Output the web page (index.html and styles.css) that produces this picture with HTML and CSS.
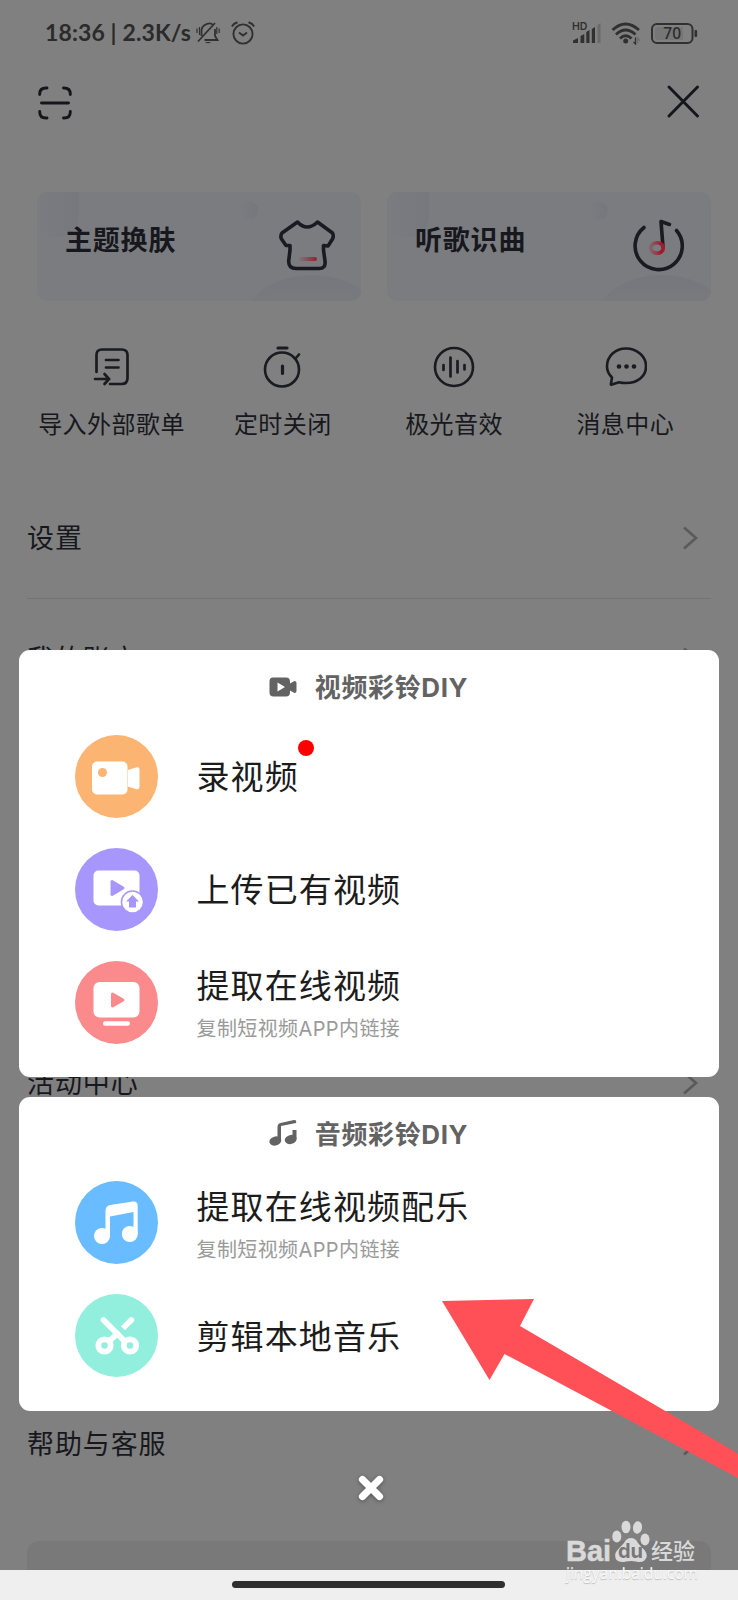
FILE: index.html
```html
<!DOCTYPE html>
<html lang="zh-CN">
<head>
<meta charset="utf-8">
<title>彩铃DIY</title>
<link rel="stylesheet" href="styles.css">
</head>
<body>
<div class="phone">
  <main class="page">
    <header class="status">
      <span class="status-text">18:36 | 2.3K/s</span>
      <svg class="bell" width="24" height="24" viewBox="0 0 24 24" fill="none" stroke="#303030" stroke-width="1.800">
        <path d="M2 20.500L19 2M8 4.500Q14 .5 17 4M5.500 15V9Q6 6 8 4.500M19 8V15L21.500 19H8.500"/>
        <path d="M1 7.500V12M3.500 6V14M20.800 6V13M23.200 7.500V12" stroke-width="1.200"/>
        <path d="M9 21H15Q12 23.600 9 21Z" fill="#303030" stroke="none"/>
      </svg>
      <svg class="alarm" width="24" height="24" viewBox="0 0 24 24" fill="none" stroke="#303030" stroke-width="1.900">
        <circle cx="12" cy="13" r="9.600"/><path d="M8 11.500L12 14.500L16 11.500"/><path d="M.8 5.500Q2.500 2.500 6.500 1.200M23.200 5.500Q21.500 2.500 17.500 1.200" stroke-width="2"/>
      </svg>
      <span class="spacer"></span>
      <svg class="signal" width="29" height="23" viewBox="0 0 29 23" fill="#303030">
        <text x="0" y="8.300" class="hd">HD</text>
        <path d="M1 21V18.500L6 16V21ZM8.500 21V14L12.300 12V21ZM14.300 21V10L17.500 8V21ZM19.800 21V7L23 5V21Z"/>
        <path d="M25.500 21V3L28.500 1V21Z" fill="#6a6a6a"/>
      </svg>
      <svg class="wifi" width="30" height="24" viewBox="0 0 30 24" fill="none" stroke="#303030" stroke-width="2.800">
        <path d="M1.500 9Q14.500-3 28 9M5 13.500Q14.500 4.500 24.500 13.500M9 17.500Q14.500 12 20.500 17.500"/>
        <circle cx="14.700" cy="20" r="2.500" fill="#303030" stroke="none"/>
        <path d="M24.500 16.500V23L22.500 21" stroke-width="1.300"/><path d="M26.500 22.500V17L29 20" stroke="#6c6c6c" stroke-width="1.300"/>
      </svg>
      <svg class="battery" width="47" height="21" viewBox="0 0 47 21">
        <rect x="1" y="1" width="40.500" height="19" rx="5" fill="none" stroke="#303030" stroke-width="2"/>
        <path d="M4 7Q4 4 7 4H32V17H7Q4 17 4 14Z" fill="#767676"/>
        <rect x="43.500" y="7" width="2.600" height="7" rx="1" fill="#303030"/>
        <text x="21.200" y="16" text-anchor="middle" class="pct">70</text>
      </svg>
    </header>

    <div class="topbar">
      <svg class="scan" width="34" height="34" viewBox="0 0 34 34" fill="none" stroke="#15161c" stroke-width="2.900" stroke-linecap="round">
        <path d="M1.700 8.500V8Q1.700 2 8 2H9M25.500 2H26Q32.300 2 32.300 8V8.500M1.700 25.500V26Q1.700 32 8 32H9M25.500 32H26Q32.300 32 32.300 26V25.500M3.500 17H30.500"/>
      </svg>
      <svg width="34" height="34" viewBox="0 0 34 34" fill="none" stroke="#15161c" stroke-width="2.900" stroke-linecap="round"><path d="M3 2L31.500 31M31.500 2L3 31"/></svg>
    </div>

    <section class="cards">
      <div class="card">
        <span class="blob corner"></span><span class="blob dot"></span><span class="blob hill"></span>
        <span class="card-title">主题换肤</span>
        <svg class="card-icon" width="56" height="54" viewBox="0 0 56 54" fill="none" stroke="#1a1b22" stroke-width="3.600" stroke-linejoin="round">
          <defs><linearGradient id="red" x1="0" x2="1"><stop offset="0" stop-color="#a01b2f" stop-opacity="0"/><stop offset="1" stop-color="#a01b2f"/></linearGradient></defs>
          <path d="M18.500 3Q28 13 38.500 3L53.500 14Q55 17 53.500 20L49 27L44.500 26.500V31L46 42Q47 49.500 40 49.500H17Q9.500 49.500 9.700 42L11 31V26.500L7 26.500L2.500 20Q1 17 3 14Z"/>
          <rect x="19" y="38" width="19" height="4" rx="2" fill="url(#red)" stroke="none"/>
        </svg>
      </div>
      <div class="card">
        <span class="blob corner"></span><span class="blob dot"></span><span class="blob hill"></span>
        <span class="card-title">听歌识曲</span>
        <svg class="card-icon note" width="52" height="54" viewBox="0 0 52 54" fill="none" stroke="#1a1b22" stroke-width="3.600" stroke-linecap="round" stroke-linejoin="round">
          <path d="M12 8.500A23.600 23.600 0 1 0 44.500 11.500"/>
          <path d="M37.500 5.500L29 2.500L31 28"/>
          <ellipse cx="25" cy="29" rx="6.300" ry="5.300" stroke="url(#red2)"/>
          <defs><linearGradient id="red2" x1="0" x2="1"><stop offset="0" stop-color="#a01b2f" stop-opacity=".25"/><stop offset=".8" stop-color="#a01b2f"/></linearGradient></defs>
        </svg>
      </div>
    </section>

    <nav class="tools">
      <div class="tool">
        <svg width="44" height="44" viewBox="0 0 44 44" fill="none" stroke="#1a1b20" stroke-width="2.700" stroke-linecap="round">
          <path d="M6.500 27V10Q6.500 4.500 12 4.500H31.500Q37.500 4.500 37.500 10V33Q37.500 39 31.500 39H20M16 15H28.500M16 22.500H28.500M5 34H18M14.500 29L19 34L14.500 39"/>
        </svg><span>导入外部歌单</span>
      </div>
      <div class="tool">
        <svg width="44" height="44" viewBox="0 0 44 44" fill="none" stroke="#1a1b20" stroke-width="2.600" stroke-linecap="round">
          <circle cx="21" cy="24.500" r="17"/><path d="M34.500 13.500L38 9.500"/><path d="M17 3H26M21.500 21V28.500" stroke-width="3.200"/>
        </svg><span>定时关闭</span>
      </div>
      <div class="tool">
        <svg width="44" height="44" viewBox="0 0 44 44" fill="none" stroke="#1a1b20" stroke-width="2.600" stroke-linecap="round">
          <circle cx="22" cy="22" r="19"/><path d="M11.500 20V25M18.500 12.500V31.500M25.500 16V27.500M32.500 20V24.500" stroke-width="2.700"/>
        </svg><span>极光音效</span>
      </div>
      <div class="tool">
        <svg width="44" height="44" viewBox="0 0 44 44" fill="none" stroke="#1a1b20" stroke-width="2.600" stroke-linejoin="round">
          <path d="M9 39.500Q7.500 40 8 38.500L9 32.500Q4 27.500 4 21.500C4 11 12.500 3.500 23 3.500S43 11 43 21.200S34.500 38 23 38Q19 38 16 37.200Z"/>
          <g fill="#1a1b20" stroke="none"><circle cx="16" cy="21.500" r="2.300"/><circle cx="23.500" cy="21.500" r="2.300"/><circle cx="31" cy="21.500" r="2.300"/></g>
        </svg><span>消息中心</span>
      </div>
    </nav>

    <section class="list">
      <div class="row line"><span>设置</span><svg class="chev" width="16" height="24" viewBox="0 0 16 24"><path d="M2 1.500L14 12L2 22.500"/></svg></div>
      <div class="row"><span>我的账户</span><svg class="chev" width="16" height="24" viewBox="0 0 16 24"><path d="M2 1.500L14 12L2 22.500"/></svg></div>
      <div class="row activity"><span>活动中心</span><svg class="chev" width="16" height="24" viewBox="0 0 16 24"><path d="M2 1.500L14 12L2 22.500"/></svg></div>
      <div class="row help"><span>帮助与客服</span><svg class="chev" width="16" height="24" viewBox="0 0 16 24"><path d="M2 1.500L14 12L2 22.500"/></svg></div>
    </section>
    <button class="logout">退出登录</button>
  </main>

  <div class="overlay">
    <section class="dialog">
      <h2 class="dialog-head">
        <svg width="28" height="28" viewBox="0 0 28 28" fill="#636363"><path fill-rule="evenodd" d="M4 4.500H17Q21 4.500 21 8.500V10.500L25.500 8Q27.500 8 27.500 10V18Q27.500 20 25.500 20L21 17.500V19.500Q21 23.500 17 23.500H4.500Q.5 23.500 .5 19.500V8.500Q.5 4.500 4 4.500ZM8.500 9.500V18.500L16 14Z"/></svg>
        <span>视频彩铃DIY</span>
      </h2>
      <div class="item">
        <svg class="disc" viewBox="0 0 83 83"><circle cx="41.500" cy="41.500" r="41.500" fill="#fbb471"/>
          <rect x="17" y="26.500" width="35.500" height="33" rx="5" fill="#fff"/><path d="M52.800 35L61 32.500Q64.500 31.500 64.500 34.500V51.500Q64.500 55 61 54L52.800 51.500Z" fill="#fff"/><circle cx="27.500" cy="37.500" r="4.500" fill="#fbb471"/></svg>
        <div class="copy"><span class="name">录视频<i class="badge"></i></span></div>
      </div>
      <div class="item">
        <svg class="disc" viewBox="0 0 83 83"><circle cx="41.500" cy="41.500" r="41.500" fill="#a797fc"/>
          <rect x="18.500" y="22.500" width="46" height="35" rx="5" fill="#fff"/><path d="M37 33.500L48 40L37 46.500Z" fill="#a797fc" stroke="#a797fc" stroke-width="3" stroke-linejoin="round"/>
          <circle cx="57.500" cy="54" r="11.800" fill="#a797fc"/><circle cx="57.500" cy="54" r="10.300" fill="#fff"/><path d="M57.500 47L64 53.500H61V59.500H54V53.500H51Z" fill="#a797fc"/></svg>
        <div class="copy"><span class="name">上传已有视频</span></div>
      </div>
      <div class="item">
        <svg class="disc" viewBox="0 0 83 83"><circle cx="41.500" cy="41.500" r="41.500" fill="#fa8a8b"/>
          <rect x="18.500" y="21" width="46" height="35.500" rx="6" fill="#fff"/><path d="M37.500 33L48 39L37.500 45Z" fill="#fa8a8b" stroke="#fa8a8b" stroke-width="3" stroke-linejoin="round"/><rect x="28" y="60.300" width="27" height="4.500" rx="2.200" fill="#fff"/></svg>
        <div class="copy sub"><span class="name">提取在线视频</span><span class="desc">复制短视频APP内链接</span></div>
      </div>
    </section>

    <section class="dialog">
      <h2 class="dialog-head">
        <svg width="28" height="28" viewBox="0 0 28 28" fill="#636363"><path d="M8.500 8Q8.500 4.500 11.500 4L25 1Q28 .8 27 4L12 7V21H8.500Z"/><path d="M23.500 11H27.500V20H23.500Z"/><ellipse cx="6.300" cy="22" rx="6" ry="4.500" transform="rotate(-15 6.300 22)"/><ellipse cx="21.700" cy="20.500" rx="6" ry="4.500" transform="rotate(-15 21.700 20.500)"/></svg>
        <span>音频彩铃DIY</span>
      </h2>
      <div class="item">
        <svg class="disc" viewBox="0 0 83 83"><circle cx="41.500" cy="41.500" r="41.500" fill="#69bcff"/>
          <g fill="#fff"><path d="M30.500 30Q30.500 25 35 24L58 20.500Q62.700 20 62.700 25V53H58.500V31L35 35.500V55H30.500Z"/><circle cx="27" cy="55" r="8"/><circle cx="54.800" cy="53" r="8"/></g></svg>
        <div class="copy sub"><span class="name">提取在线视频配乐</span><span class="desc">复制短视频APP内链接</span></div>
      </div>
      <div class="item">
        <svg class="disc" viewBox="0 0 83 83" fill="none" stroke="#fff"><circle cx="41.500" cy="41.500" r="41.500" fill="#92eedd" stroke="none"/>
          <path d="M28.500 26L49.500 47M34.500 47L42.500 39.500" stroke-width="5.700" stroke-linecap="round"/><path d="M56.300 26L56 26.300" stroke-width="5.700" stroke-linecap="round"/><path d="M56.500 25.800L48 34.300" stroke-width="5.700"/>
          <circle cx="29.500" cy="51.500" r="6.200" stroke-width="5.800"/><circle cx="55" cy="51.500" r="6.200" stroke-width="5.800"/></svg>
        <div class="copy low"><span class="name">剪辑本地音乐</span></div>
      </div>
    </section>
    <svg class="dismiss" width="26" height="26" viewBox="0 0 26 26"><path d="M4.500 4.500L21.500 21.500M21.500 4.500L4.500 21.500" stroke="#fff" stroke-width="7.200" stroke-linecap="round"/></svg>
  </div>

  <footer class="navbar"><span class="pill"></span></footer>

  <svg class="pointer" width="296" height="180" viewBox="0 0 296 180"><path d="M0 2L92 0L78 27L296 154.500V179L62.500 55L47.500 81Z" fill="#ff5058"/></svg>

  <div class="watermark">
    <div class="mark">
      <span class="bai">Bai</span>
      <svg width="38" height="43" viewBox="0 0 38 43" fill="#d9d9d9"><ellipse cx="4.800" cy="16.500" rx="4.500" ry="6"/><ellipse cx="14" cy="7" rx="4.500" ry="6.300"/><ellipse cx="25.500" cy="7.500" rx="4.500" ry="6.200" transform="rotate(8 25.500 7.500)"/><ellipse cx="33" cy="19.500" rx="4.500" ry="6"/><path d="M19 18Q23.500 18 26 23Q29 27 32.500 30Q37 36 32.500 40.500Q29 43 24 41.500Q19 40.500 14 41.500Q8 43 4.500 40Q1.500 35 5 30.500L12 23Q14.500 18 19 18Z"/><text x="18.500" y="37.800" text-anchor="middle" class="du">du</text></svg>
      <span class="exp">经验</span>
    </div>
    <span class="url">jingyan.baidu.com</span>
  </div>
</div>
</body>
</html>
```

FILE: styles.css
```css
* { box-sizing: border-box; }
body { margin: 0; }
.phone {
  position: relative;
  width: 738px;
  height: 1600px;
  overflow: hidden;
  background: #808080;
  color: #17181d;
  font-family: "Noto Sans CJK SC", sans-serif;
  display: flex;
  flex-direction: column;
}
svg { display: block; flex: none; }
.page { height: 1570px; overflow: hidden; display: flex; flex-direction: column; }

/* Status bar */
.status { height: 66px; flex: none; padding: 0 40px 0 45px; display: flex; align-items: center; }
.status-text { width: 146px; margin-top: -2px; font: 700 23px/30px Lato, sans-serif; letter-spacing: .12px; color: #2b2b2b; white-space: nowrap; }
.bell { margin-left: 5px; }
.alarm { margin-left: 11px; }
.spacer { flex: 1; }
.signal { overflow: visible; }
.hd { font: 600 10.500px Inter, sans-serif; }
.wifi { margin-left: 10px; }
.battery { margin-left: 10px; }
.pct { font: 500 15.500px "Noto Sans", sans-serif; fill: #2b2b2b; }

.topbar { height: 72px; flex: none; padding: 0 38px; display: flex; align-items: center; justify-content: space-between; }
.scan { margin-top: 2px; }

/* Feature cards */
.cards { flex: none; margin-top: 54px; padding: 0 27px 0 37px; display: grid; grid-template-columns: 1fr 1fr; gap: 26px; }
.card {
  position: relative;
  height: 109px;
  border-radius: 10px;
  overflow: hidden;
  background: #7b7c7f;
  padding: 27px 26px 0 28px;
  display: flex;
  justify-content: space-between;
}
.card-title { position: relative; font-size: 27px; line-height: 40px; font-weight: 700; letter-spacing: .8px; }
.card-icon { position: relative; }
.card-icon.note { margin-right: 1px; }
.blob { position: absolute; background: #76787e; }
.corner { left: 0; top: 0; width: 42px; height: 46px; border-radius: 0 0 22px 0; background: linear-gradient(90deg, #7b7c80, #76787d); }
.dot { left: 202px; top: 9px; width: 19px; height: 19px; border-radius: 50%; background: linear-gradient(90deg, #7b7c7f, #75777c); }
.hill { left: 206px; top: 83px; width: 138px; height: 100px; border-radius: 50%; background: linear-gradient(#75777c, #7b7c7f 45%); }

/* Tool shortcuts */
.tools { flex: none; margin-top: 44px; padding: 0 27px 0 26px; height: 97px; display: grid; grid-template-columns: repeat(4, 1fr); }
.tool { display: flex; flex-direction: column; align-items: center; gap: 19px; font-size: 24px; line-height: 30px; letter-spacing: .5px; white-space: nowrap; }

/* Settings list */
.list { flex: none; height: 1063px; padding: 0 27px; margin-top: 36px; }
.row { height: 120px; display: flex; align-items: center; justify-content: space-between; padding: 0 13px 0 0; font-size: 27px; letter-spacing: .9px; }
.row span { padding-bottom: 3px; }
.line { height: 121px; border-bottom: 1px solid #737373; }
.activity { margin-top: 304px; }
.help { margin-top: 241px; }
.chev path { fill: none; stroke: #5a5a5c; stroke-width: 2.700; }
.logout {
  flex: none;
  height: 87px;
  margin: 0 27px;
  padding: 0;
  border: 0;
  border-radius: 12px;
  background: #797979;
  color: #17181d;
  font: 500 27px/87px "Noto Sans CJK SC", sans-serif;
  letter-spacing: .9px;
}

/* Dialog layer */
.overlay { position: absolute; left: 19px; right: 19px; top: 650px; display: flex; flex-direction: column; }
.dialog { background: #fff; border-radius: 11px; padding-bottom: 18px; margin-bottom: 19.500px; }
.dialog-head {
  margin: 0;
  height: 70px;
  padding: 3px 1px 0 0;
  display: flex;
  align-items: center;
  justify-content: center;
  gap: 18px;
  font-family: Inter, "Noto Sans CJK SC", sans-serif;
  font-size: 26px;
  font-weight: 700;
  letter-spacing: .6px;
  line-height: 36px;
  color: #636363;
}
.dialog-head span { padding-top: 3px; }
.item { height: 113px; padding-left: 56px; display: flex; align-items: center; }
.disc { width: 83px; height: 83px; margin: 0 38.500px 1px 0; }
.copy { display: flex; flex-direction: column; align-items: flex-start; white-space: nowrap; padding-bottom: 4px; }
.copy.low { padding-bottom: 2px; }
.copy.sub { padding: 1px 0 0; }
.name { position: relative; font-size: 33px; line-height: 46px; letter-spacing: 1.100px; color: #1c1c1c; }
.sub .name { margin-bottom: 7px; margin-top: -1px; }
.desc { font-family: Inter, "Noto Sans CJK SC", sans-serif; font-size: 20px; line-height: 30px; letter-spacing: .4px; color: #9a9a9a; }
.badge { position: absolute; left: 101px; top: -12px; width: 16px; height: 16px; border-radius: 50%; background: #f00; }
.dismiss { align-self: center; margin: 45px 0 0 3px; filter: drop-shadow(0 1px 2px rgba(0, 0, 0, .35)); }

.navbar { height: 30px; background: #efefef; display: flex; justify-content: center; padding: 11px 1px 0 0; }
.pill { width: 273px; height: 7px; border-radius: 4px; background: #2f2f2f; }

.pointer { position: absolute; left: 442px; top: 1299px; }

.watermark { position: absolute; left: 566px; top: 1520px; color: #d9d9d9; }
.mark { display: flex; height: 43px; align-items: flex-end; }
.bai { font: 700 29px/32px "Liberation Sans", sans-serif; width: 46px; height: 32px; margin-bottom: -4px; -webkit-text-stroke: .5px #d9d9d9; }
.exp { font-size: 22px; font-weight: 500; line-height: 28px; margin-left: 1px; height: 28px; margin-bottom: 0; }
.du { font: 700 20px Inter, sans-serif; fill: #777; }
.url { display: block; font: 15.500px/20px "Open Sans", sans-serif; color: #fafafa; text-shadow: 0 1px 1px #bbb; white-space: nowrap; }
```
